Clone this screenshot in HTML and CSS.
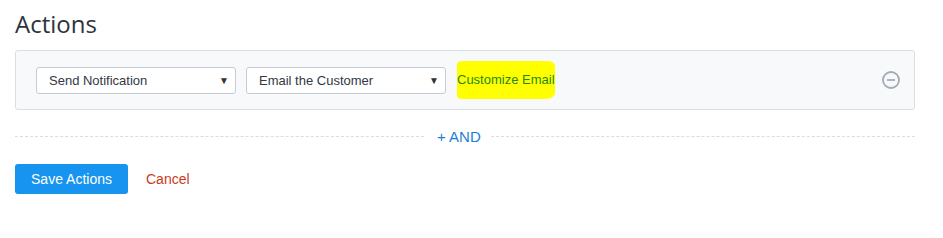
FILE: index.html
```html
<!DOCTYPE html>
<html>
<head>
<meta charset="utf-8">
<link rel="stylesheet" href="styles.css">
</head>
<body>
<div class="page">
  <h1 class="title">Actions</h1>
  <div class="panel">
    <div class="select"><span>Send Notification</span><span class="caret">&#9660;</span></div>
    <div class="select"><span>Email the Customer</span><span class="caret">&#9660;</span></div>
    <span class="highlight">Customize Email</span>
    <span class="spacer"></span>
    <svg class="remove" width="20" height="20" viewBox="0 0 20 20">
      <circle cx="10" cy="10" r="8" fill="none" stroke="#a3abb6" stroke-width="1.8"/>
      <line x1="6" y1="10" x2="14" y2="10" stroke="#a3abb6" stroke-width="1.8"/>
    </svg>
  </div>
  <div class="divider">
    <span class="line left"></span>
    <span class="and">+ AND</span>
    <span class="line"></span>
  </div>
  <div class="buttons">
    <button class="save">Save Actions</button>
    <span class="cancel">Cancel</span>
  </div>
</div>
</body>
</html>
```
FILE: styles.css
```css
html, body {
  margin: 0;
  padding: 0;
  background: #ffffff;
}
.page {
  padding: 10px 28px 0 15px;
  font-family: "Liberation Sans", Arial, sans-serif;
  color: #333a44;
}
.title {
  margin: 0;
  font-family: "Open Sans", sans-serif;
  font-weight: 400;
  font-size: 24px;
  line-height: 28px;
  color: #2d333b;
}
.panel {
  margin-top: 12px;
  height: 58px;
  border: 1px solid #d9dee4;
  border-radius: 3px;
  background: #f8f9fa;
  display: flex;
  align-items: center;
  padding: 0 13px 0 20px;
}
.select {
  box-sizing: border-box;
  width: 200px;
  height: 27px;
  border: 1px solid #c5ccd4;
  border-radius: 3px;
  background: #fff;
  display: flex;
  align-items: center;
  justify-content: space-between;
  padding: 0 6px 0 12px;
  margin-right: 10px;
  font-size: 13px;
  color: #33383f;
}
.caret {
  font-size: 10px;
  color: #333;
}
.highlight {
  background: #ffff00;
  color: #1e8a14;
  font-size: 13px;
  padding: 11px 0 12px 0;
  margin-left: 1px;
  border-radius: 5px 7px 9px 4px / 3px 5px 6px 4px;
}
.spacer { flex: 1; }
.remove { display: block; }
.divider {
  display: flex;
  align-items: center;
  margin-top: 17px;
  height: 18px;
}
.line {
  flex: 1;
  border-top: 1px dashed #d5dde5;
}
.line.left {
  flex: none;
  width: 409px;
}
.and {
  color: #1b7fd6;
  font-size: 15px;
  padding: 0 10px 0 13px;
}
.buttons {
  margin-top: 19px;
  display: flex;
  align-items: center;
}
.save {
  background: #1694f0;
  color: #fff;
  border: none;
  border-radius: 3px;
  height: 30px;
  width: 113px;
  font-family: "Liberation Sans", Arial, sans-serif;
  font-size: 14px;
  padding: 0;
}
.cancel {
  margin-left: 18px;
  color: #cc3a22;
  font-size: 14px;
}
```
